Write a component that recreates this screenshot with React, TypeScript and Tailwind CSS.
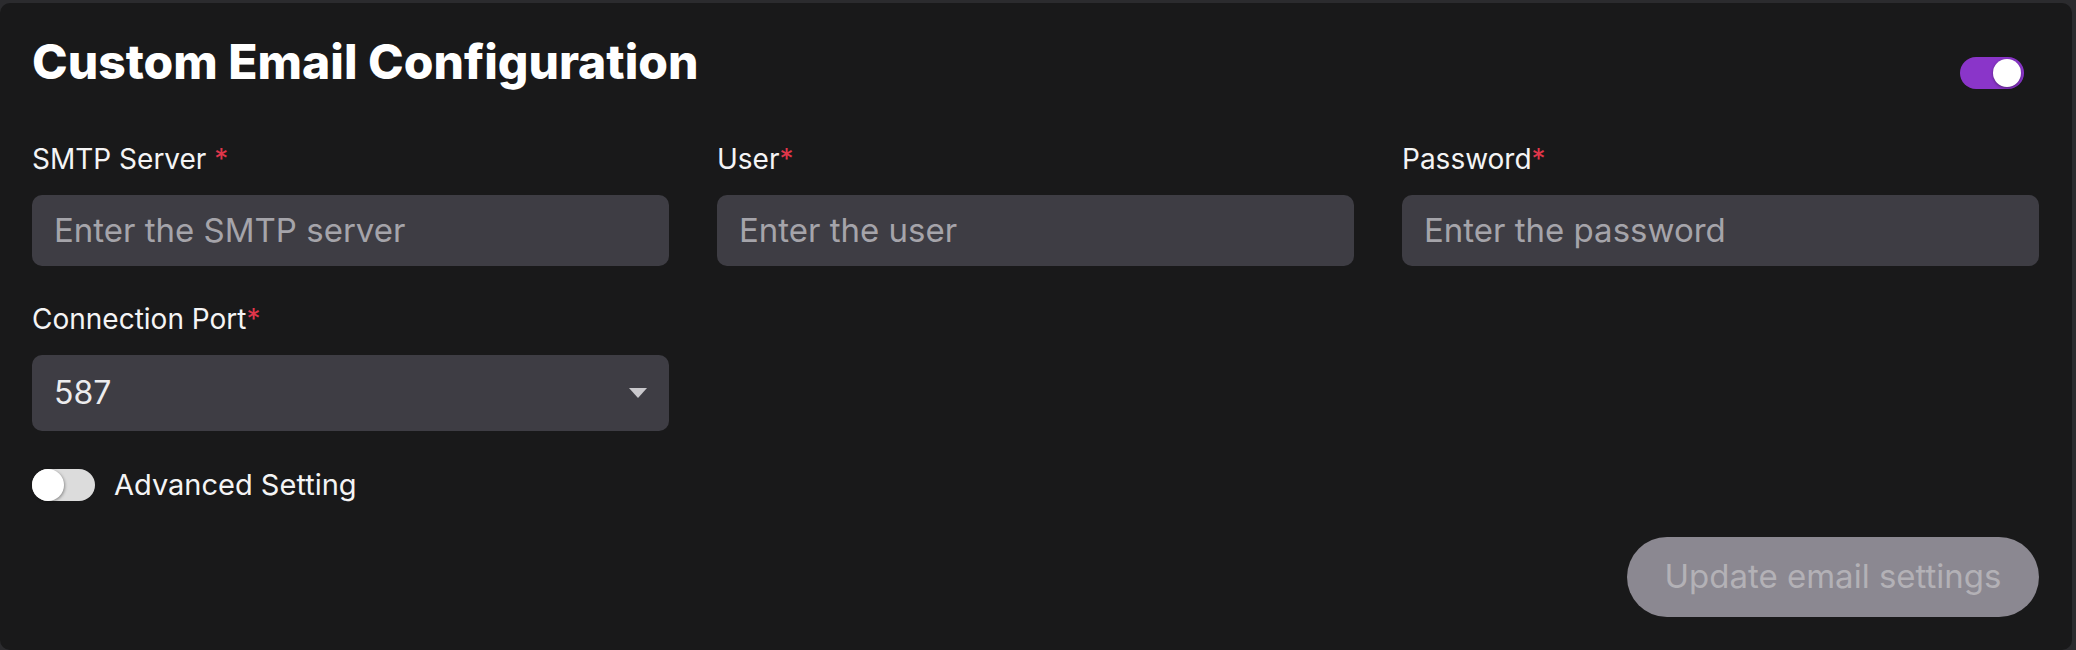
import React from "react";

const F = { fontFamily: "Inter, 'Noto Sans', sans-serif" };

function Label({ text, space }: { text: string; space?: boolean }) {
  return (
    <div className="text-[28px] leading-[32px] text-[#f4f4f5]">
      {text}
      {space ? " " : ""}
      <span className="text-[#e0364a]">*</span>
    </div>
  );
}

function Input({ placeholder }: { placeholder: string }) {
  return (
    <div className="mt-[20px] h-[71px] rounded-[10px] bg-[#3e3d44] flex items-center px-[22px]">
      <span className="text-[33px] text-[#a5a4aa]">{placeholder}</span>
    </div>
  );
}

export default function App() {
  return (
    <div className="w-[2076px] h-[650px] bg-[#2b2b2e] pt-[3px] pr-[4px]" style={F}>
      <div className="h-full bg-[#19191a] rounded-[10px] pl-[32px] pr-[33px] pt-[33px] flex flex-col">
        <div className="flex justify-between items-start">
          <h1 className="text-[48px] leading-[52px] font-extrabold text-white">Custom Email Configuration</h1>
          <div className="mt-[21px] mr-[15px] w-[64px] h-[32px] rounded-full bg-[#8a35c9] flex items-center justify-end pr-[3px]">
            <div className="w-[28px] h-[28px] rounded-full bg-white shadow-[0_1px_3px_rgba(0,0,0,0.4)]" />
          </div>
        </div>
        <div className="mt-[54px] grid grid-cols-3 gap-x-[48px]">
          <div>
            <Label text="SMTP Server" space />
            <Input placeholder="Enter the SMTP server" />
          </div>
          <div>
            <Label text="User" />
            <Input placeholder="Enter the user" />
          </div>
          <div>
            <Label text="Password" />
            <Input placeholder="Enter the password" />
          </div>
        </div>
        <div className="mt-[37px] grid grid-cols-3 gap-x-[48px]">
          <div>
            <Label text="Connection Port" />
            <div className="mt-[20px] h-[76px] rounded-[10px] bg-[#3e3d44] flex items-center justify-between pl-[22px] pr-[22px]">
              <span className="text-[32px] text-[#ececee]">587</span>
              <svg width="18" height="10" viewBox="0 0 18 10">
                <path d="M0 0 L18 0 L9 10 Z" fill="#c9c8cc" />
              </svg>
            </div>
          </div>
        </div>
        <div className="mt-[38px] flex items-center">
          <div className="w-[63px] h-[32px] rounded-full bg-[#dcdcdc] flex items-center">
            <div className="w-[32px] h-[32px] rounded-full bg-white shadow-[1px_1px_3px_rgba(0,0,0,0.35)]" />
          </div>
          <span className="ml-[19px] text-[29px] leading-[32px] text-[#f4f4f5]">Advanced Setting</span>
        </div>
        <div className="mt-[36px] flex justify-end">
          <button className="w-[412px] h-[80px] rounded-full bg-[#8b8891] text-[33px] text-[#b3b1b6]">
            Update email settings
          </button>
        </div>
      </div>
    </div>
  );
}
